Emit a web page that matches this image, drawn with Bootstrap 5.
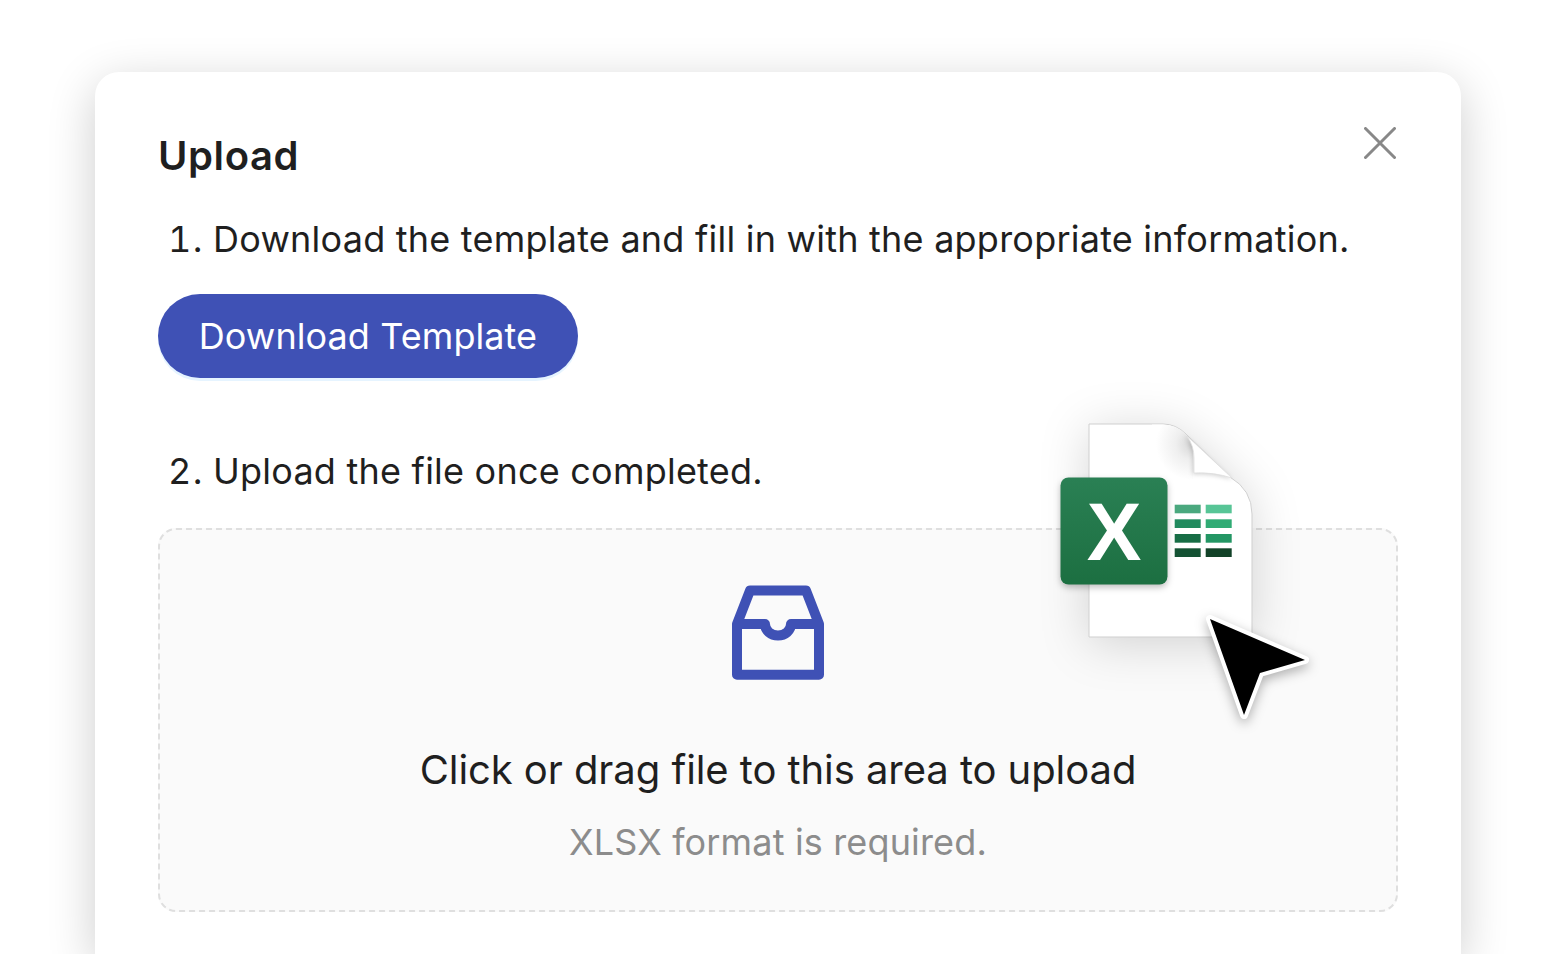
<!DOCTYPE html>
<html lang="en">
<head>
    <meta charset="UTF-8" />
    <title>Upload</title>
    <link href="https://cdn.jsdelivr.net/npm/bootstrap@5.3.0/dist/css/bootstrap.min.css" rel="stylesheet" />
    <style>
        html, body { height: 100%; overflow: hidden; }
        body {
            background: #fff;
            font-family: Inter, "Liberation Sans", sans-serif;
            color: #1f1f1f;
            padding: 72px 95px 0;
        }
        .upload-card {
            height: 882px;
            border: 0;
            border-radius: 24px 24px 0 0;
            padding: 58px 63px 0;
            box-shadow: 0 12px 48px rgba(0, 0, 0, .2);
        }
        .upload-title { font-size: 40px; font-weight: 600; line-height: 52px; letter-spacing: .6px; margin: 0; }
        .close-x { width: 32px; height: 32px; padding: 0; border: 0; background: none; margin: -3px 2px 0 0; line-height: 0; }
        .step-text { font-size: 36px; line-height: 48px; letter-spacing: .23px; padding-left: 10px; margin: 0; }
        .step-num { width: 45px; flex: none; font-variant-numeric: tabular-nums; letter-spacing: 1.5px; }
        .step-one { margin-top: 33px; }
        .step-two { margin-top: 69px; }
        .template-btn {
            --bs-btn-bg: #3f51b5;
            --bs-btn-hover-bg: #3f51b5;
            --bs-btn-color: #fff;
            --bs-btn-hover-color: #fff;
            font-size: 36px;
            letter-spacing: .08px;
            height: 84px;
            width: 420px;
            padding: 0;
            margin-top: 31px;
            border: 0;
            border-radius: 42px;
            box-shadow: 0 3px 0 rgba(5, 145, 255, .1);
        }
        .drop-zone {
            height: 384px;
            margin-top: 33px;
            background: #fafafa;
            border: 2px dashed #dfdfdf;
            border-radius: 18px;
        }
        .drop-icon { width: 140px; height: 125px; margin-top: 40px; }
        .drop-main { font-size: 40px; line-height: 52px; letter-spacing: -.07px; margin: 49px 0 0; }
        .drop-hint { font-size: 36px; line-height: 48px; letter-spacing: .16px; color: #8c8c8c; margin: 22px 0 0; }
        .file-art { position: absolute; left: 1040px; top: 410px; width: 290px; height: 320px; overflow: visible; }
        .art-sheet { filter: drop-shadow(0 6px 24px rgba(0, 0, 0, .16)); }
        .art-fold { filter: drop-shadow(-1px 1px 2px rgba(0, 0, 0, .18)); }
        .art-badge { filter: drop-shadow(0 3px 3px rgba(0, 0, 0, .25)); }
        .art-cursor { filter: drop-shadow(0 4px 6px rgba(0, 0, 0, .3)); }
        .art-letter { font-family: "Liberation Sans", sans-serif; font-weight: 700; font-size: 82px; }
    </style>
</head>
<body>

<div class="card upload-card">
    <div class="d-flex justify-content-between align-items-start">
        <h2 class="upload-title">Upload</h2>
        <button type="button" class="close-x" aria-label="Close">
            <svg width="32" height="32" viewBox="0 0 32 32" fill="none" stroke="#888" stroke-width="3" stroke-linecap="round">
                <path d="M1.500 1.500l29 29M30.500 1.500l-29 29" />
            </svg>
        </button>
    </div>

    <div class="step-text step-one d-flex"><span class="step-num">1.</span><span>Download the template and fill in with the appropriate information.</span></div>
    <div>
        <button type="button" class="btn template-btn">Download Template</button>
    </div>

    <div class="step-text step-two d-flex"><span class="step-num">2.</span><span>Upload the file once completed.</span></div>

    <div class="drop-zone d-flex flex-column align-items-center text-center">
        <svg class="drop-icon" viewBox="-2 0 140 125" fill="none" stroke="#3f51b5" stroke-width="10" stroke-linejoin="round">
            <path d="M27 54L40 20.500H96L109 54V104.700H27Z" />
            <path d="M27 54H55a13 11.500 0 0 0 26 0H109" />
        </svg>
        <p class="drop-main">Click or drag file to this area to upload</p>
        <p class="drop-hint">XLSX format is required.</p>
    </div>
</div>

<svg class="file-art" viewBox="0 0 290 320">
    <defs>
        <linearGradient id="badgeFill" x1="0" y1="0" x2="0" y2="1">
            <stop offset="0" stop-color="#2a8054" />
            <stop offset="1" stop-color="#1c6f41" />
        </linearGradient>
        <radialGradient id="sheetShade" gradientUnits="userSpaceOnUse" cx="152" cy="34" r="36">
            <stop offset="0" stop-color="#d6d6d6" />
            <stop offset=".45" stop-color="#efefef" />
            <stop offset="1" stop-color="#fff" />
        </radialGradient>
    </defs>
    <g class="art-sheet">
        <path d="M49 14H123Q136 14 146 24L190 67Q212 80 212 104V227H49Z" fill="#fff" stroke="#cfcfcf" stroke-width="1" />
    </g>
    <path d="M112 14.500H123Q136 14.500 146 24.500L153 32V72H112Z" fill="url(#sheetShade)" />
    <g class="art-fold">
        <path d="M147 26Q154 36 154 48V63Q174 62 192 68Z" fill="#fff" stroke="#dedede" stroke-width=".8" />
    </g>
    <g>
        <rect x="134.700" y="94.700" width="26" height="8.600" fill="#4aa87e" />
        <rect x="165.700" y="94.700" width="26" height="8.600" fill="#57c596" />
        <rect x="134.700" y="109.300" width="26" height="8.700" fill="#218a5e" />
        <rect x="165.700" y="109.300" width="26" height="8.700" fill="#30ab74" />
        <rect x="134.700" y="124" width="26" height="8.700" fill="#176d45" />
        <rect x="165.700" y="124" width="26" height="8.700" fill="#239664" />
        <rect x="134.700" y="138.300" width="26" height="8.700" fill="#145233" />
        <rect x="165.700" y="138.300" width="26" height="8.700" fill="#124228" />
    </g>
    <g class="art-badge">
        <rect x="20.500" y="67.500" width="107" height="107" rx="8" fill="url(#badgeFill)" />
    </g>
    <text class="art-letter" x="74" y="150" text-anchor="middle" fill="#fff">X</text>
    <g class="art-cursor">
        <path d="M170 209L265 250L220 263L204 305Z" fill="#000" stroke="#fff" stroke-width="8" stroke-linejoin="round" paint-order="stroke" />
    </g>
</svg>

<script src="https://cdn.jsdelivr.net/npm/bootstrap@5.3.0/dist/js/bootstrap.bundle.min.js"></script>
</body>
</html>
